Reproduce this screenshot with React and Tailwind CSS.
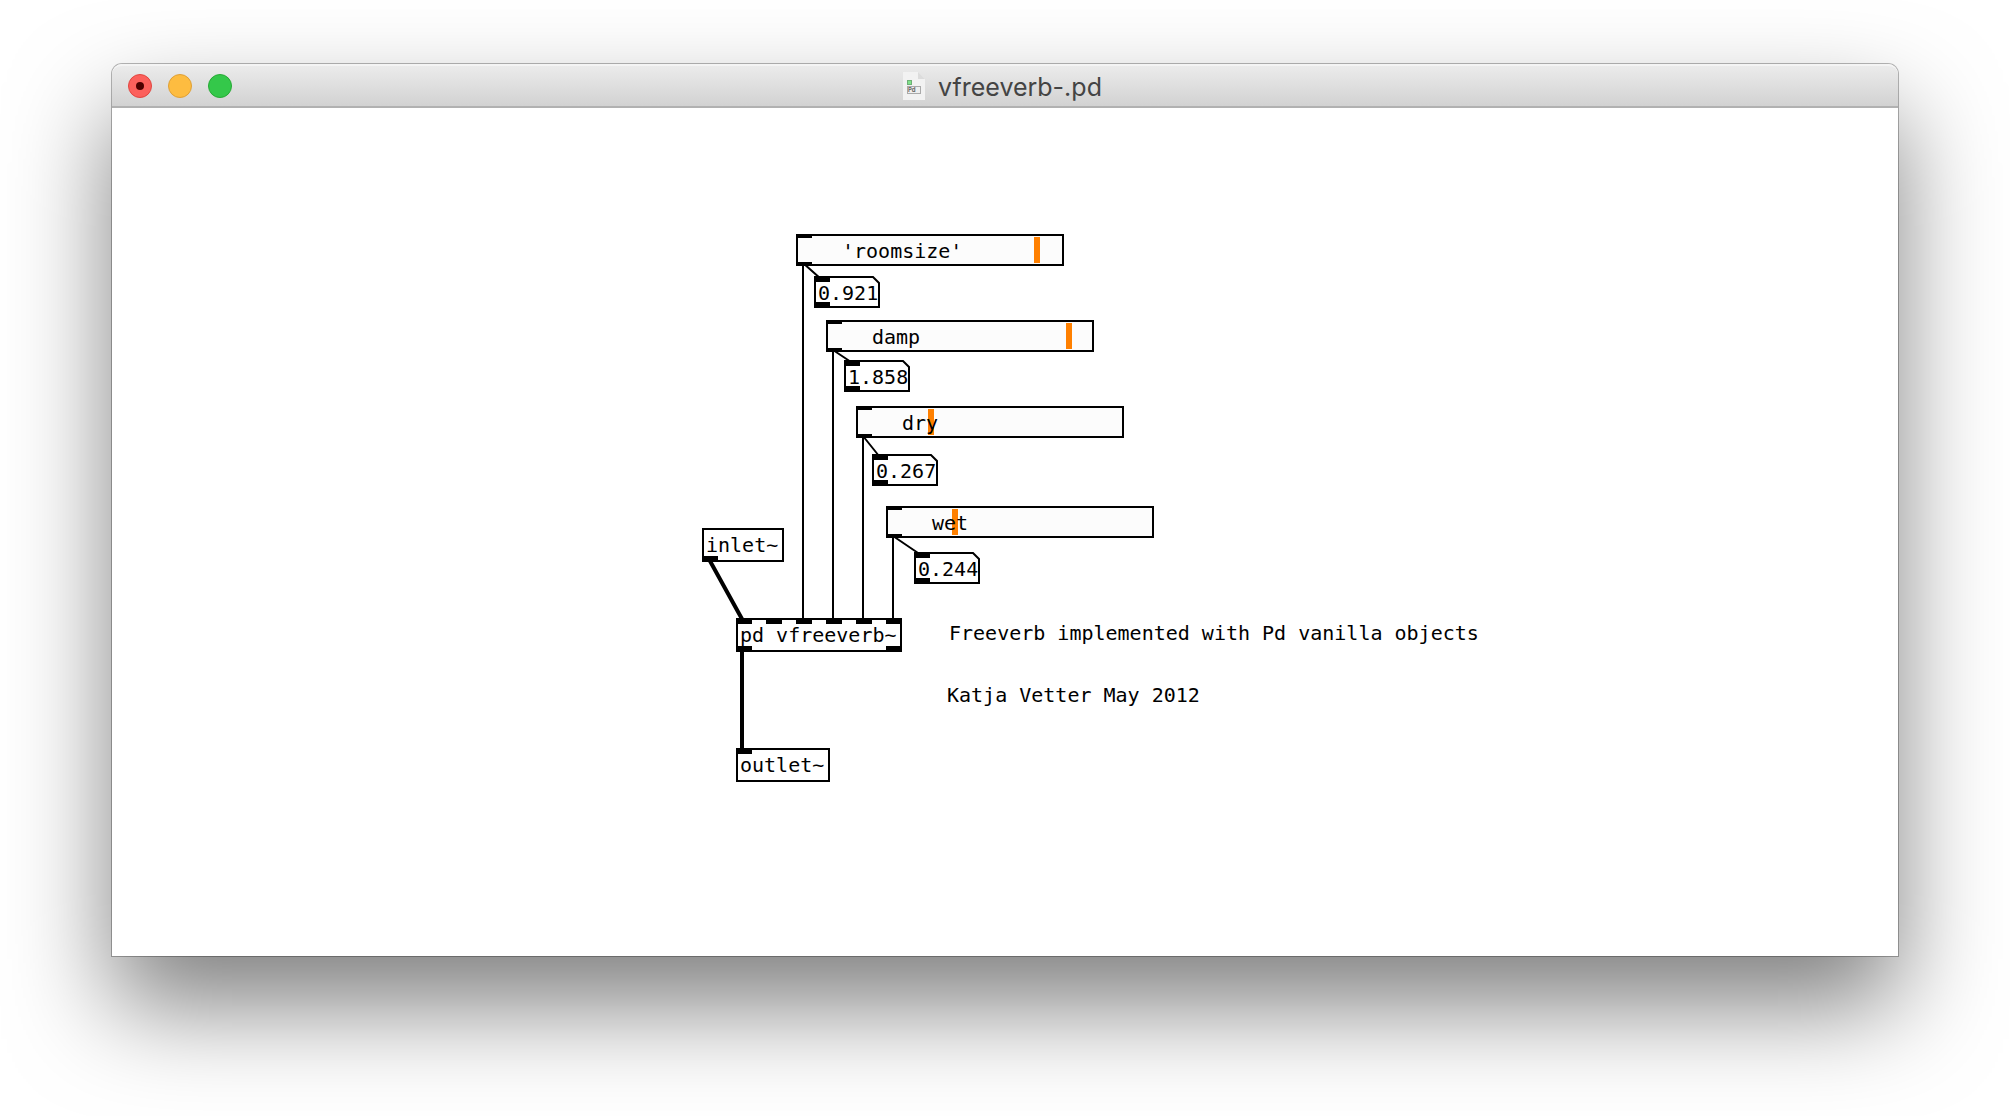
const sliders = [
  { name: "'roomsize'", place: "left-[684px] top-[126px]", value: 236 },
  { name: "damp", place: "left-[714px] top-[212px]", value: 238 },
  { name: "dry", place: "left-[744px] top-[298px]", value: 70 },
  { name: "wet", place: "left-[774px] top-[398px]", value: 64 },
];

const numbers = [
  { name: "roomsize value", place: "left-[702px] top-[168px]", value: "0.921" },
  { name: "damp value", place: "left-[732px] top-[252px]", value: "1.858" },
  { name: "dry value", place: "left-[760px] top-[346px]", value: "0.267" },
  { name: "wet value", place: "left-[802px] top-[444px]", value: "0.244" },
];

function SliderNode({ name, place, value }) {
  return (
    <label className={`absolute block h-8 w-[268px] border-2 border-black bg-[#fcfcfc] ${place}`}>
      <input
        type="range"
        min={0}
        max={258}
        defaultValue={value}
        className="block h-full w-full cursor-pointer appearance-none bg-transparent [&::-webkit-slider-thumb]:h-[26px] [&::-webkit-slider-thumb]:w-[6px] [&::-webkit-slider-thumb]:appearance-none [&::-webkit-slider-thumb]:bg-[#ff8000]"
      />
      <span className="pointer-events-none absolute inset-0 flex items-center pt-0.5 pl-11">{name}</span>
      <span className="absolute -top-0.5 -left-0.5 h-1 w-4 bg-black" />
      <span className="absolute -bottom-0.5 -left-0.5 h-1 w-4 bg-black" />
    </label>
  );
}

function NumberNode({ name, place, value }) {
  return (
    <div className={`absolute h-8 w-[66px] ${place}`}>
      <svg className="absolute inset-0" width="66" height="32" aria-hidden="true">
        <path d="M1 1H59L65 7V31H1Z" fill="#fff" stroke="#000" strokeWidth="2" />
        <path d="M0 0H16V6H0ZM0 26H16V32H0Z" />
      </svg>
      <input aria-label={name} defaultValue={value} className="relative block h-full w-full bg-transparent pt-0.5 pl-1 outline-none" />
    </div>
  );
}

function ObjectNode({ text, place, inlets = [], outlets = [] }) {
  return (
    <div className={`absolute flex h-[34px] items-center border-2 border-black bg-white pl-0.5 ${place}`}>
      <span className="whitespace-pre">{text}</span>
      {inlets.map((side) => (
        <span key={side} className={`absolute -top-0.5 h-1.5 w-4 bg-black ${side}`} />
      ))}
      {outlets.map((side) => (
        <span key={side} className={`absolute -bottom-0.5 h-1.5 w-4 bg-black ${side}`} />
      ))}
    </div>
  );
}

function Wires() {
  return (
    <svg className="pointer-events-none absolute top-0 left-0" width="1100" height="848" fill="none" stroke="#000" aria-hidden="true">
      <path strokeWidth="2" d="M691 156V512M721 242V512M751 328V512M781 428V512" />
      <path strokeWidth="2" d="M691 155L709 171M721 242L739 254M751 328L767 348M781 428L809 447" />
      <path strokeWidth="4" d="M598 453L630 511M630 542V642" />
    </svg>
  );
}

function FileIcon() {
  return (
    <svg width="32" height="32" viewBox="0 0 32 32" aria-hidden="true">
      <path d="M5 1H20L27 8V29H5Z" fill="#f2f2f2" />
      <path d="M20 1V8H27Z" fill="#dcdcdc" />
      <rect x="9.5" y="9.5" width="4" height="4" fill="#7fe38a" stroke="#6fae76" />
      <rect x="9.5" y="15.5" width="13" height="7" fill="#eee" stroke="#aaa" />
      <text x="10" y="21" fontSize="6" fontWeight="700" fill="#666">Pd</text>
    </svg>
  );
}

export default function App() {
  return (
    <div className="min-h-screen overflow-hidden bg-white px-28 pt-16 pb-40">
      <main className="rounded-t-[10px] shadow-[0_0_0_1px_rgba(0,0,0,0.28),0_50px_100px_rgba(0,0,0,0.5)]">
        <header className="grid h-11 grid-cols-[1fr_auto_1fr] items-center rounded-t-[10px] border-t-2 border-b-2 border-t-[#f4f4f4] border-b-[#b1b1b1] bg-linear-to-b from-[#ebebeb] to-[#d2d2d2] px-4">
          <div className="flex gap-4">
            <button aria-label="Close" className="flex size-6 items-center justify-center rounded-full border border-[#e14640] bg-[#fc605c]">
              <span className="size-2 rounded-full bg-[#4d0000]" />
            </button>
            <button aria-label="Minimize" className="size-6 rounded-full border border-[#dfa036] bg-[#fdbc40]" />
            <button aria-label="Zoom" className="size-6 rounded-full border border-[#27aa35] bg-[#34c84a]" />
          </div>
          <div className="flex items-center gap-2 pt-0.5 pr-2.5 font-['Inter',sans-serif]">
            <FileIcon />
            <h1 className="text-[25px] leading-8 text-[#444]">vfreeverb-.pd</h1>
          </div>
        </header>
        <div className="relative h-[848px] overflow-hidden bg-white font-['DejaVu_Sans_Mono',monospace] text-[20px] leading-6 text-black">
          <ObjectNode text="inlet~" place="left-[590px] top-[420px] w-[82px]" outlets={["-left-0.5"]} />
          <ObjectNode
            text="pd vfreeverb~"
            place="left-[624px] top-[510px] w-[166px]"
            inlets={["-left-0.5", "left-[28px]", "left-[58px]", "left-[88px]", "left-[118px]", "left-[148px]"]}
            outlets={["-left-0.5", "left-[148px]"]}
          />
          <ObjectNode text="outlet~" place="left-[624px] top-[640px] w-[94px]" inlets={["-left-0.5"]} />
          {sliders.map((s) => (
            <SliderNode key={s.name} {...s} />
          ))}
          {numbers.map((n) => (
            <NumberNode key={n.name} {...n} />
          ))}
          <Wires />
          <p className="absolute top-[513px] left-[837px] whitespace-nowrap">Freeverb implemented with Pd vanilla objects</p>
          <p className="absolute top-[575px] left-[835px] whitespace-nowrap">Katja Vetter May 2012</p>
        </div>
      </main>
    </div>
  );
}
